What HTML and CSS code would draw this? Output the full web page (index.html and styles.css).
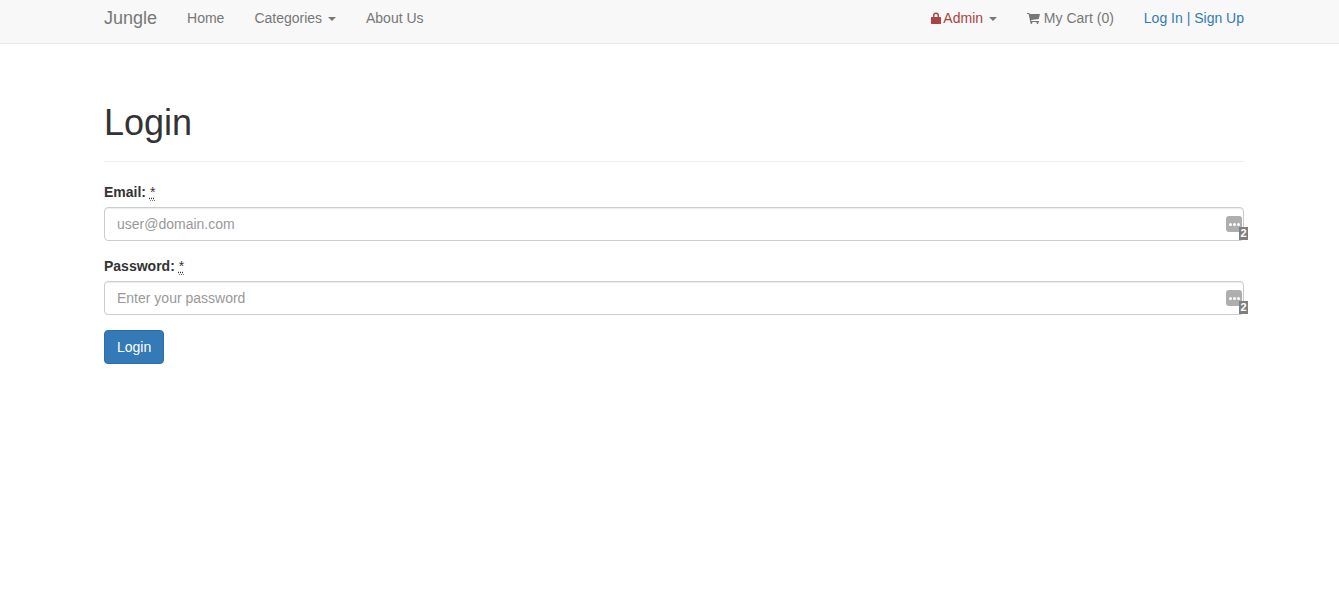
FILE: index.html
```html
<!DOCTYPE html>
<html lang="en">
<head>
<meta charset="utf-8">
<title>Login</title>
<link rel="stylesheet" href="styles.css">
</head>
<body>
<nav class="navbar">
  <div class="nav-inner">
    <a class="brand" href="#">Jungle</a>
    <ul class="nav">
      <li><a href="#">Home</a></li>
      <li><a href="#">Categories <span class="caret"></span></a></li>
      <li><a href="#">About Us</a></li>
    </ul>
    <ul class="nav nav-right">
      <li><a href="#"><svg class="lock" viewBox="0 0 10 12" width="10" height="12"><path d="M2 5V3.500a3 3 0 0 1 6 0V5h1.200c.5 0 .8.4.8.8v5.400c0 .5-.3.8-.8.8H.8c-.5 0-.8-.3-.8-.8V5.800C0 5.400.3 5 .8 5zM3.400 5h3.200V3.500a1.600 1.600 0 0 0-3.200 0z"/></svg><span class="admin">Admin</span> <span class="caret"></span></a></li>
      <li><a href="#"><svg class="cart" viewBox="0 0 14 13" width="13" height="12"><path d="M0 1h2.500l.4 1.300H14l-1.300 5.400-8.300.9.300 1.100h8.300v1.100H3.500L1.700 2.100H0z"/><circle cx="4.700" cy="11.700" r="1.200"/><circle cx="11.300" cy="11.700" r="1.200"/></svg> My Cart (0)</a></li>
      <li class="auth"><a class="link" href="#">Log In</a> <span class="sep">|</span> <a class="link" href="#">Sign Up</a></li>
    </ul>
  </div>
</nav>
<main class="container">
  <div class="page-header"><h1>Login</h1></div>
  <form>
    <div class="form-group">
      <label for="email">Email: <abbr title="required">*</abbr></label>
      <div class="field">
        <input id="email" type="text" placeholder="user@domain.com">
        <span class="pm"><span class="dots"><i></i><i></i><i></i></span><span class="badge">2</span></span>
      </div>
    </div>
    <div class="form-group">
      <label for="password">Password: <abbr title="required">*</abbr></label>
      <div class="field">
        <input id="password" type="password" placeholder="Enter your password">
        <span class="pm"><span class="dots"><i></i><i></i><i></i></span><span class="badge">2</span></span>
      </div>
    </div>
    <button class="btn" type="button">Login</button>
  </form>
</main>
</body>
</html>
```
FILE: styles.css
```css
* { box-sizing: border-box; }
html, body { margin: 0; padding: 0; }
body {
  font-family: "Liberation Sans", Arial, sans-serif;
  font-size: 14px;
  line-height: 20px;
  color: #333;
  background: #fff;
}
a { text-decoration: none; }
.navbar {
  height: 44px;
  background: #f8f8f8;
  border-bottom: 1px solid #e7e7e7;
}
.nav-inner {
  width: 1140px;
  margin-left: 104px;
  display: flex;
  align-items: center;
  padding-top: 8px;
}
.brand { color: #777; font-size: 18px; margin-right: 30px; }
.nav { list-style: none; margin: 0; padding: 0; display: flex; gap: 30px; }
.nav a { color: #777; }
.nav-right { margin-left: auto; }
.admin { color: #a94442; }
.nav a.link { color: #337ab7; }
.sep { color: #337ab7; }
.caret {
  display: inline-block;
  width: 0;
  height: 0;
  margin-left: 2px;
  vertical-align: middle;
  border-top: 4px solid;
  border-left: 4px solid transparent;
  border-right: 4px solid transparent;
}
.lock { fill: #a94442; vertical-align: -1px; margin-right: 2px; }
.cart { fill: #777; vertical-align: -1px; }
.container { width: 1140px; margin-left: 104px; }
.page-header {
  margin-top: 59px;
  padding-bottom: 18px;
  border-bottom: 1px solid #eee;
  margin-bottom: 20px;
}
h1 { margin: 0; font-size: 36px; font-weight: 500; line-height: 40px; color: #333; }
.form-group { margin-bottom: 15px; }
label { display: block; font-weight: 700; margin-bottom: 5px; }
abbr { font-weight: 400; text-decoration: underline dotted; border-bottom: 1px dotted #777; cursor: help; }
.field { position: relative; }
input {
  display: block;
  width: 100%;
  height: 34px;
  padding: 6px 12px;
  font: inherit;
  color: #555;
  background: #fff;
  border: 1px solid #ccc;
  border-radius: 4px;
  box-shadow: inset 0 1px 1px rgba(0,0,0,.075);
}
input::placeholder { color: #999; opacity: 1; }
.pm { position: absolute; left: 1122px; top: 9px; width: 22px; height: 24px; }
.dots {
  position: absolute;
  left: 0;
  top: 0;
  width: 16px;
  height: 16px;
  border-radius: 3px;
  background: #aeaeae;
  display: flex;
  align-items: center;
  justify-content: center;
  gap: 1px;
}
.dots i { width: 3px; height: 3px; border-radius: 50%; background: #fff; }
.badge {
  position: absolute;
  left: 13px;
  top: 11px;
  width: 9px;
  height: 13px;
  background: #7f7f7f;
  color: #fff;
  font-size: 11px;
  font-weight: 700;
  line-height: 13px;
  text-align: center;
}
.btn {
  display: block;
  height: 34px;
  padding: 6px 12px;
  font: inherit;
  color: #fff;
  background: #337ab7;
  border: 1px solid #2e6da4;
  border-radius: 4px;
}
```
